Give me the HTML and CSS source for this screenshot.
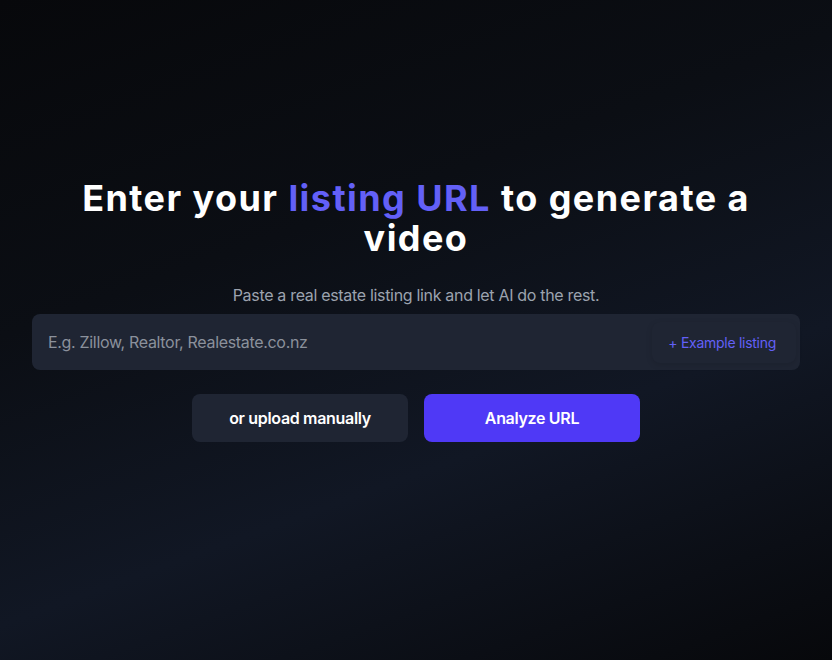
FILE: index.html
```html
<!DOCTYPE html>
<html lang="en">
<head>
  <meta charset="UTF-8" />
  <meta name="viewport" content="width=device-width, initial-scale=1.0"/>
  <title>Listing to video</title>
  <link rel="stylesheet" href="styles.css">
</head>
<body>
  <main class="hero">
    <h1 class="hero-title">Enter your <span class="accent">listing URL</span> to generate a video</h1>
    <p class="hero-sub">Paste a real estate listing link and let AI do the rest.</p>

    <div class="url-box">
      <input class="url-input" type="text" placeholder="E.g. Zillow, Realtor, Realestate.co.nz">
      <button class="example-btn">+ Example listing</button>
    </div>

    <div class="actions">
      <button class="btn btn-dark">or upload manually</button>
      <button class="btn btn-primary">Analyze URL</button>
    </div>
  </main>
</body>
</html>
```

FILE: styles.css
```css
* { box-sizing: border-box; }
html, body { height: 100%; }
body {
  margin: 0;
  font-family: Inter, "Noto Sans", sans-serif;
  color: #fff;
  background: linear-gradient(160deg, #07080b 0%, #0b0e14 35%, #111724 65%, #07080b 100%);
}

.hero {
  min-height: 100%;
  display: flex;
  flex-direction: column;
  align-items: center;
  justify-content: center;
  padding: 0 32px 40px;
  text-align: center;
}

.hero-title {
  margin: 0;
  font-size: 36px;
  line-height: 40px;
  font-weight: 700;
  letter-spacing: 0.04em;
  max-width: 720px;
}
.accent { color: #6360f7; }

.hero-sub {
  margin: 25px 0 7px;
  font-size: 16px;
  line-height: 24px;
  letter-spacing: -0.02em;
  color: #9ca3af;
}

.url-box {
  width: 100%;
  height: 56px;
  display: flex;
  align-items: center;
  background: #1f2533;
  border-radius: 8px;
  padding: 0 4px 0 16px;
}
.url-input {
  flex: 1;
  min-width: 0;
  padding: 0;
  background: transparent;
  border: none;
  outline: none;
  font-family: inherit;
  font-size: 16px;
  letter-spacing: -0.02em;
  color: #fff;
}
.url-input::placeholder { color: #8b919c; }

.example-btn {
  background: #1f2533;
  border: none;
  border-radius: 8px;
  padding: 12px 20px 12px 16px;
  font-family: inherit;
  font-size: 14px;
  letter-spacing: -0.02em;
  color: #6360f7;
  box-shadow: 0 2px 6px rgba(0,0,0,0.12);
  cursor: pointer;
}

.actions {
  display: flex;
  gap: 16px;
  margin-top: 24px;
}
.btn {
  width: 216px;
  height: 48px;
  border: none;
  border-radius: 8px;
  font-family: inherit;
  font-size: 16px;
  font-weight: 600;
  letter-spacing: -0.02em;
  color: #fff;
  cursor: pointer;
}
.btn-dark { background: #1f2533; }
.btn-primary { background: #4f39f6; }
```
